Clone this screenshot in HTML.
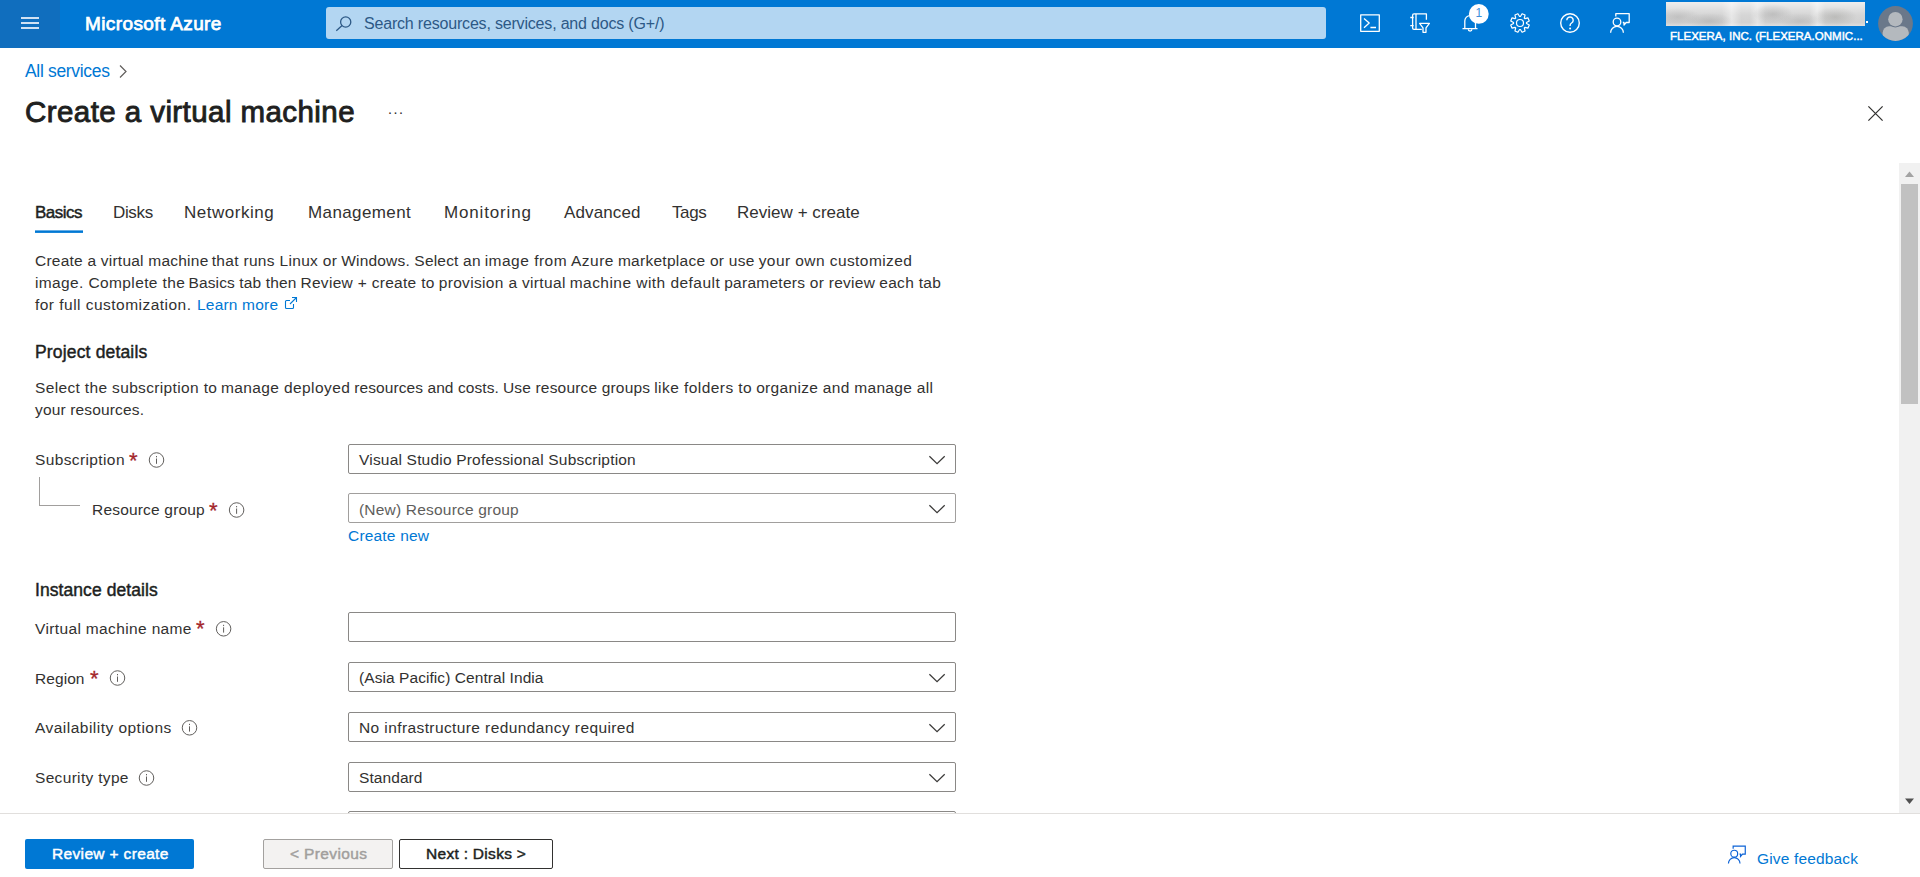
<!DOCTYPE html>
<html lang="en">
<head>
<meta charset="utf-8">
<title>Create a virtual machine - Microsoft Azure</title>
<style>
*{box-sizing:border-box;margin:0;padding:0}
html,body{width:1920px;height:877px;overflow:hidden;background:#fff}
body{position:relative;font-family:"Liberation Sans",sans-serif;color:#323130;font-size:15.5px}
.t{position:absolute;white-space:nowrap;line-height:1;transform-origin:0 0}
.sb{-webkit-text-stroke:.45px currentColor}
#topbar{position:absolute;left:0;top:0;width:1920px;height:48px;background:#0078d4}
#burger{position:absolute;left:0;top:0;width:60px;height:48px;background:#106ebe}
#burger i{position:absolute;left:21px;width:18px;height:2px;background:#d0e1f3}
#search{position:absolute;left:326px;top:7px;width:1000px;height:32px;background:#b3d6f2;border-radius:3px}
.ico{position:absolute;overflow:visible}
.box{position:absolute;left:348px;width:608px;height:30px;border:1px solid #8a8886;border-radius:2px;background:#fff}
.ast{color:#a4262c;-webkit-text-stroke:.3px #a4262c}
.link{color:#0078d4}
.btn{position:absolute;top:839px;height:30px;border-radius:2px}
</style>
</head>
<body>

<!-- ===== top bar ===== -->
<div id="topbar">
  <div id="burger"><i style="top:17px"></i><i style="top:22px"></i><i style="top:27px"></i></div>
  <span class="t sb" id="brand" style="-webkit-text-stroke:.75px #fff;left:85px;top:14.15px;font-size:19px;color:#fff;letter-spacing:0.390px">Microsoft Azure</span>
  <div id="search"></div>
  <svg class="ico" id="sicon" style="left:335px;top:14px" width="18" height="18" viewBox="0 0 18 18" fill="none" stroke="#2d5986" stroke-width="1.300"><circle cx="10.700" cy="8" r="5.100"/><path d="M7.100 11.600 1.300 16.800"/></svg>
  <span class="t" id="stext" style="left:364px;top:16.15px;font-size:16px;color:#2d5986;letter-spacing:-0.186px">Search resources, services, and docs (G+/)</span>
</div>

<!-- ===== top bar icons ===== -->
<svg class="ico" id="tbicons" style="left:0;top:0" width="1920" height="48" viewBox="0 0 1920 48" fill="none" stroke="#fff" stroke-width="1.3" stroke-linejoin="round">
  <!-- cloud shell -->
  <rect x="1360.7" y="14.8" width="18.6" height="16.5"/>
  <path d="M1364 18.6 1369.2 23.1 1364 27.7M1370.4 27.5H1376"/>
  <!-- directory + filter -->
  <path d="M1426.4 19.8V13.9H1414a1.4 1.4 0 0 0-1.400 1.400V28a1.400 1.400 0 0 0 1.400 1.400H1421.800"/>
  <path d="M1416 13.9V29.4" stroke-width="1.6" opacity=".8"/>
  <path d="M1410.300 17.500H1413.600M1410.300 25.700H1413.600"/>
  <path d="M1419.600 23.400H1429.400L1426 27.800V32.300H1423V27.800Z"/>
  <!-- bell -->
  <path d="M1462.500 28.700H1477.500M1464.800 28.700V20.900a5.350 5.350 0 0 1 10.700 0V28.700"/>
  <path d="M1468.300 29.300a1.800 1.800 0 0 0 3.600 0"/>
  <circle cx="1478.800" cy="13.900" r="9.900" fill="#fff" stroke="none"/>
  <!-- gear -->
  <path d="M1520.41 16.51 L1522.10 13.73 L1525.07 14.96 L1524.30 18.12 L1524.88 18.70 L1528.04 17.93 L1529.27 20.90 L1526.49 22.59 L1526.49 23.41 L1529.27 25.10 L1528.04 28.07 L1524.88 27.30 L1524.30 27.88 L1525.07 31.04 L1522.10 32.27 L1520.41 29.49 L1519.59 29.49 L1517.90 32.27 L1514.93 31.04 L1515.70 27.88 L1515.12 27.30 L1511.96 28.07 L1510.73 25.10 L1513.51 23.41 L1513.51 22.59 L1510.73 20.90 L1511.96 17.93 L1515.12 18.70 L1515.70 18.12 L1514.93 14.96 L1517.90 13.73 L1519.59 16.51Z" stroke-width="1.2"/>
  <circle cx="1520" cy="23" r="3.500" stroke-width="1.2"/>
  <!-- help -->
  <circle cx="1570" cy="23" r="9.300" stroke-width="1.400"/>
  <path d="M1566.800 20.200a3.200 3.200 0 1 1 4.800 2.800c-1 .6-1.500 1.200-1.500 2.400v.6" stroke-width="1.400"/>
  <circle cx="1570.100" cy="28.500" r="1" fill="#fff" stroke="none"/>
  <!-- feedback -->
  <path d="M1615.800 16.500V13.700H1629.200V22.500H1626.200L1624 25V22.500H1622.800"/>
  <circle cx="1617" cy="22" r="3.800"/>
  <path d="M1610.600 32.800a6.400 6.400 0 0 1 12.800 0"/>
</svg>
<span class="t" id="badge" style="left:1475.600px;top:7.15px;font-size:12px;color:#3d8fdb">1</span>
<div id="blur" style="position:absolute;left:1666px;top:2px;width:199px;height:24px;background:radial-gradient(ellipse 22px 9px at 12px 15px,rgba(150,150,150,.30),transparent),radial-gradient(ellipse 24px 8px at 43px 19px,rgba(140,140,140,.32),transparent),radial-gradient(ellipse 20px 10px at 107px 12px,rgba(140,140,140,.32),transparent),radial-gradient(ellipse 22px 8px at 134px 19px,rgba(150,150,150,.30),transparent),radial-gradient(ellipse 22px 10px at 169px 15px,rgba(140,140,135,.34),transparent),linear-gradient(90deg,transparent 0,transparent 28%,rgba(255,255,255,.45) 33%,transparent 38%,transparent 42%,rgba(255,255,255,.4) 46%,transparent 50%,transparent 72%,rgba(255,255,255,.45) 76%,transparent 80%),linear-gradient(180deg,#eeeeee 0,#e2e2e2 25%,#d5d5d5 55%,#d1d1d1 85%,#dedede 100%)"></div>
<div style="position:absolute;left:1866px;top:21px;width:2px;height:2px;background:#fff"></div>
<span class="t sb" id="acct" style="left:1670px;top:31.15px;font-size:11.5px;color:#fff;letter-spacing:0.015px">FLEXERA, INC. (FLEXERA.ONMIC...</span>
<svg class="ico" id="avatar" style="left:1878px;top:6px" width="35" height="35" viewBox="0 0 35 35"><defs><clipPath id="avc"><circle cx="17.500" cy="17.500" r="17.400"/></clipPath></defs><circle cx="17.500" cy="17.500" r="17.400" fill="#6a788a"/><g clip-path="url(#avc)" fill="#b4b9be"><path d="M4.600 36V26.800a6.500 6.500 0 0 1 6.500-6.500H24.300a6.500 6.500 0 0 1 6.500 6.500V36z"/><circle cx="17.400" cy="13.200" r="8.300" fill="#6a788a"/><circle cx="17.400" cy="13.200" r="7.200"/></g></svg>

<!-- ===== breadcrumb + title ===== -->
<span class="t link" id="bc" style="left:25px;top:63.15px;font-size:17.5px;letter-spacing:-0.327px">All services</span>
<svg class="ico" style="left:118px;top:65px" width="10" height="14" viewBox="0 0 10 14" fill="none" stroke="#605e5c" stroke-width="1.2"><path d="M2 .5 8 6.500 2 12.500"/></svg>
<span class="t" id="title" style="-webkit-text-stroke:.9px #201f1e;left:25px;top:97.15px;font-size:29.5px;color:#201f1e;letter-spacing:0.429px">Create a virtual machine</span>
<span class="t" id="dots" style="left:387.500px;top:104.150px;font-size:15px;color:#323130;letter-spacing:.55px">···</span>
<svg class="ico" style="left:1867px;top:105px" width="18" height="18" viewBox="0 0 18 18" fill="none" stroke="#323130" stroke-width="1.250"><path d="M1.400 1.400 15.600 15.600M15.600 1.400 1.400 15.600"/></svg>

<!-- ===== tabs ===== -->
<span class="t sb" id="tab0" style="left:35px;top:204.15px;font-size:17px;color:#201f1e;letter-spacing:-0.496px">Basics</span>
<svg class="ico" id="tabline" style="left:35px;top:229px" width="48" height="5" viewBox="0 0 48 5"><rect x="0" y="1.400" width="48" height="2.500" fill="#0078d4"/></svg>
<span class="t" id="tab1" style="left:113px;top:204.15px;font-size:17px;letter-spacing:-0.341px">Disks</span>
<span class="t" id="tab2" style="left:184px;top:204.15px;font-size:17px;letter-spacing:0.517px">Networking</span>
<span class="t" id="tab3" style="left:308px;top:204.15px;font-size:17px;letter-spacing:0.385px">Management</span>
<span class="t" id="tab4" style="left:444px;top:204.15px;font-size:17px;letter-spacing:0.847px">Monitoring</span>
<span class="t" id="tab5" style="left:564px;top:204.15px;font-size:17px;letter-spacing:0.125px">Advanced</span>
<span class="t" id="tab6" style="left:672px;top:204.15px;font-size:17px;letter-spacing:-0.391px">Tags</span>
<span class="t" id="tab7" style="left:737px;top:204.15px;font-size:17px;letter-spacing:0.027px">Review + create</span>

<!-- ===== intro ===== -->
<span class="t" id="p1a" style="left:35px;top:253.15px;letter-spacing:0.229px">Create a virtual machine </span>
<span class="t" id="p1b" style="left:211.70px;top:253.15px;letter-spacing:0.319px">that runs Linux or </span>
<span class="t" id="p1c" style="left:341.20px;top:253.15px;letter-spacing:0.188px">Windows. Select an </span>
<span class="t" id="p1d" style="left:484.70px;top:253.15px;letter-spacing:0.486px">image from Azure </span>
<span class="t" id="p1e" style="left:617.95px;top:253.15px;letter-spacing:0.274px">marketplace or use </span>
<span class="t" id="p1f" style="left:758.70px;top:253.15px;letter-spacing:0.425px">your own customized</span>
<span class="t" id="p2a" style="left:35px;top:275.15px;letter-spacing:0.380px">image. Complete the </span>
<span class="t" id="p2b" style="left:188.45px;top:275.15px;letter-spacing:0.134px">Basics tab then </span>
<span class="t" id="p2c" style="left:300.45px;top:275.15px;letter-spacing:0.302px">Review + create to </span>
<span class="t" id="p2d" style="left:438.70px;top:275.15px;letter-spacing:0.336px">provision a virtual </span>
<span class="t" id="p2e" style="left:569.70px;top:275.15px;letter-spacing:0.459px">machine with default </span>
<span class="t" id="p2f" style="left:724.20px;top:275.15px;letter-spacing:0.271px">parameters or review </span>
<span class="t" id="p2g" style="left:879.20px;top:275.15px;letter-spacing:0.326px">each tab</span>
<span class="t" id="p3" style="left:35px;top:297.15px;letter-spacing:0.473px">for full customization.</span>
<span class="t link" id="learn" style="left:197px;top:297.15px;letter-spacing:0.193px">Learn more</span>
<svg class="ico" id="ext" style="left:283.700px;top:296.200px" width="14" height="14" viewBox="0 0 14 14" fill="none" stroke="#0078d4" stroke-width="1.1"><path d="M9.5 8v3.5a1 1 0 0 1-1 1h-6a1 1 0 0 1-1-1v-6a1 1 0 0 1 1-1H6"/><path d="M6 8 12.5 1.5M8 1.5h4.500v4.500"/></svg>

<!-- ===== project details ===== -->
<span class="t sb" id="h1" style="left:35px;top:344.15px;font-size:17.5px;color:#201f1e;letter-spacing:0.163px">Project details</span>
<span class="t" id="q1a" style="left:35px;top:380.15px;letter-spacing:0.349px">Select the subscription to </span>
<span class="t" id="q1b" style="left:220.95px;top:380.15px;letter-spacing:0.400px">manage deployed </span>
<span class="t" id="q1c" style="left:354.20px;top:380.15px;letter-spacing:0.087px">resources and costs. </span>
<span class="t" id="q1d" style="left:502.95px;top:380.15px;letter-spacing:0.178px">Use resource groups </span>
<span class="t" id="q1e" style="left:654.20px;top:380.15px;letter-spacing:0.445px">like folders to </span>
<span class="t" id="q1f" style="left:756.20px;top:380.15px;letter-spacing:0.317px">organize and manage all</span>
<span class="t" id="q2" style="left:35px;top:402.15px;letter-spacing:0.155px">your resources.</span>

<span class="t" id="l1" style="left:35px;top:452.15px;letter-spacing:0.382px">Subscription</span>
<span class="t ast" id="a1" style="left:129px;top:450px;font-size:22px">*</span>
<span class="t" id="l2" style="left:92px;top:502.15px;letter-spacing:0.189px">Resource group</span>
<span class="t ast" id="a2" style="left:209px;top:500px;font-size:22px">*</span>
<div id="tree" style="position:absolute;left:39px;top:477px;width:41px;height:29px;border-left:1px solid #a19f9d;border-bottom:1px solid #a19f9d"></div>

<div class="box" style="top:444px"></div>
<span class="t" id="v1" style="left:359px;top:452.15px;letter-spacing:0.193px">Visual Studio Professional Subscription</span>
<div class="box" style="top:493px;border-color:#a19f9d"></div>
<span class="t" id="v2" style="left:359px;top:502.15px;color:#605e5c;letter-spacing:0.201px">(New) Resource group</span>
<span class="t link" id="cn" style="left:348px;top:528.15px;letter-spacing:0.193px">Create new</span>

<!-- ===== instance details ===== -->
<span class="t sb" id="h2" style="left:35px;top:582.15px;font-size:17.5px;color:#201f1e;letter-spacing:0.073px">Instance details</span>
<span class="t" id="l3" style="left:35px;top:621.15px;letter-spacing:0.361px">Virtual machine name</span>
<span class="t ast" id="a3" style="left:196px;top:618px;font-size:22px">*</span>
<div class="box" style="top:612px"></div>

<span class="t" id="l4" style="left:35px;top:671.15px;letter-spacing:0.075px">Region</span>
<span class="t ast" id="a4" style="left:90px;top:668px;font-size:22px">*</span>
<div class="box" style="top:662px"></div>
<span class="t" id="v4" style="left:359px;top:670.15px;letter-spacing:0.069px">(Asia Pacific) Central India</span>

<span class="t" id="l5" style="left:35px;top:720.15px;letter-spacing:0.475px">Availability options</span>
<div class="box" style="top:712px"></div>
<span class="t" id="v5" style="left:359px;top:720.15px;letter-spacing:0.401px">No infrastructure redundancy required</span>

<span class="t" id="l6" style="left:35px;top:770.15px;letter-spacing:0.324px">Security type</span>
<div class="box" style="top:762px"></div>
<span class="t" id="v6" style="left:359px;top:770.15px;letter-spacing:0.083px">Standard</span>
<div class="box" style="top:811px"></div>

<!-- ===== chevrons / info icons ===== -->
<svg class="ico" id="overlay" style="left:0;top:0" width="1920" height="813" viewBox="0 0 1920 813" fill="none">
 <g stroke="#3b3a39" stroke-width="1.250">
  <path d="M929.400 456.3 937.050 463.7 944.700 456.3"/>
  <path d="M929.400 505.3 937.050 512.7 944.700 505.3"/>
  <path d="M929.400 674.3 937.050 681.7 944.700 674.3"/>
  <path d="M929.400 724.3 937.050 731.7 944.700 724.3"/>
  <path d="M929.400 774.3 937.050 781.7 944.700 774.3"/>
 </g>
 <g stroke="#605e5c" stroke-width="1">
  <circle cx="156.5" cy="460" r="7.250"/><path d="M156.5 458.5V463.8M156.5 456.0v1.300"/>
  <circle cx="236.6" cy="510" r="7.250"/><path d="M236.6 508.5V513.8M236.6 506.0v1.300"/>
  <circle cx="223.6" cy="628.8" r="7.250"/><path d="M223.6 627.3V632.6M223.6 624.8v1.300"/>
  <circle cx="117.5" cy="678" r="7.250"/><path d="M117.5 676.5V681.8M117.5 674.0v1.300"/>
  <circle cx="189.5" cy="727.8" r="7.250"/><path d="M189.5 726.3V731.6M189.5 723.8v1.300"/>
  <circle cx="146.5" cy="778" r="7.250"/><path d="M146.5 776.5V781.8M146.5 774.0v1.300"/>
 </g>
</svg>

<!-- ===== footer ===== -->
<div id="footer" style="position:absolute;left:0;top:813px;width:1920px;height:64px;background:#fff;border-top:1px solid #e1dfdd"></div>
<div class="btn" id="b1" style="left:25px;width:169px;background:#0078d4"></div>
<span class="t sb" id="b1t" style="left:52px;top:846.15px;font-size:15.5px;color:#fff;letter-spacing:0.344px">Review + create</span>
<div class="btn" id="b2" style="left:263px;width:130px;background:#f3f2f1;border:1px solid #a3a19f"></div>
<span class="t sb" id="b2t" style="left:290px;top:846.15px;font-size:15.5px;color:#a19f9d;letter-spacing:0.370px">&lt; Previous</span>
<div class="btn" id="b3" style="left:399px;width:154px;background:#fff;border:1px solid #323130"></div>
<span class="t sb" id="b3t" style="left:426px;top:846.15px;font-size:15.5px;color:#201f1e;letter-spacing:0.296px">Next : Disks &gt;</span>
<span class="t link" id="gf" style="left:1757px;top:851.15px;font-size:15.5px;letter-spacing:0.159px">Give feedback</span>

<!-- ===== scrollbar ===== -->
<div id="sbar" style="position:absolute;left:1899px;top:163px;width:21px;height:650px;background:#f1f1f1"></div>
<div id="thumb" style="position:absolute;left:1901px;top:184px;width:17px;height:220px;background:#c1c1c1"></div>

<svg class="ico" style="left:1899px;top:163px" width="21" height="650" viewBox="0 0 21 650"><path d="M6 14 10.500 8.500 15 14Z" fill="#a3a3a3"/><path d="M6 635.500 10.500 641 15 635.500Z" fill="#505050"/></svg>
<svg class="ico" id="gficon" style="left:1727.150px;top:843.900px" width="19.900" height="19.900" viewBox="0 0 22 22" fill="none" stroke="#0b62d6" stroke-width="1.300"><path d="M6.800 5.200V2.400H20.200V11.200H17.200L15 13.700V11.200H13.800"/><circle cx="8" cy="10.700" r="3.800"/><path d="M1.600 21.500a6.400 6.400 0 0 1 12.800 0"/></svg>

</body>
</html>
